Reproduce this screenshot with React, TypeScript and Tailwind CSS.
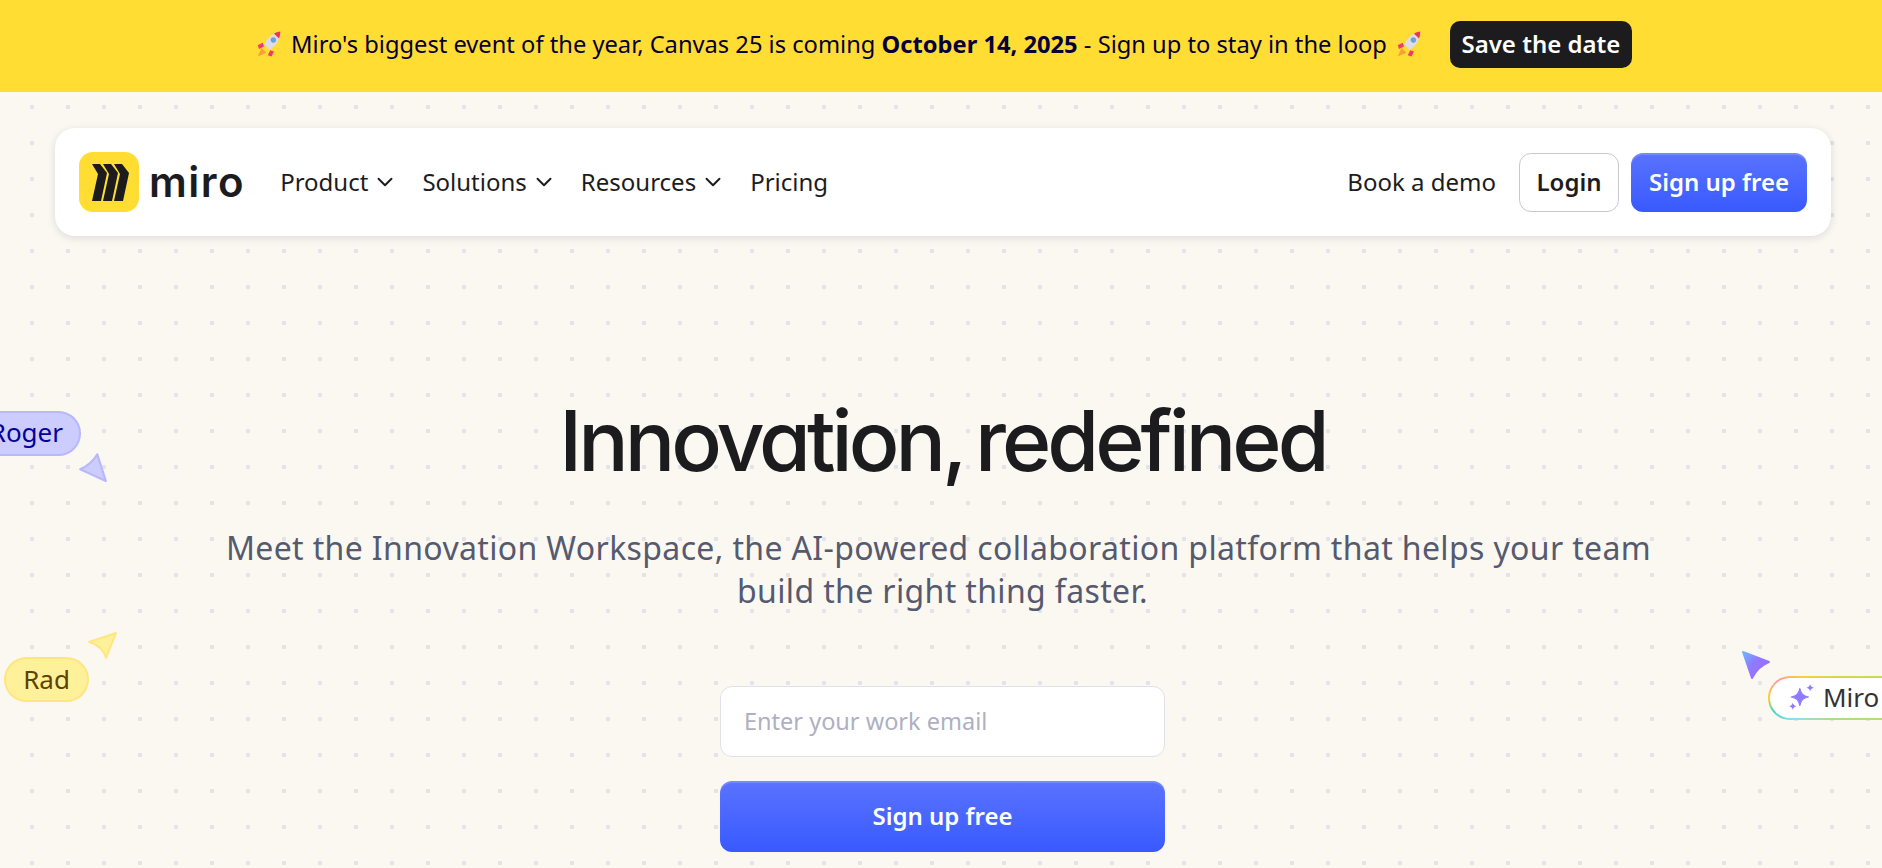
import { ChevronDown } from "lucide-react";

function Rocket() {
  return (
    <svg viewBox="0 0 24 24" className="h-[30px] w-[30px] shrink-0">
      <path d="M6 15l-3 7 7-3z" fill="#f9a03c" />
      <path d="M7 11l-4 2 1 3 4-2z" fill="#f2386f" />
      <path d="M13 17l-2 4 3 1 2-4z" fill="#f2386f" />
      <path d="M21 2c-5 .8-9 3.6-13 10l4.500 4.500c6-3.600 8.500-8.500 8.500-14.500z" fill="#dcdde8" />
      <path d="M21 2c-1.800.3-3.500.8-5 1.700L20 7.500c.7-1.600 1-3.500 1-5.500z" fill="#f0364f" />
      <circle cx="15.500" cy="8.800" r="1.900" fill="#5ba8e8" stroke="#8b8fa8" strokeWidth=".6" />
    </svg>
  );
}

function NavItem({ label }: { label: string }) {
  return (
    <button className="flex items-center gap-[4px] text-[24px] text-[#1c1c1e]">
      {label}
      <ChevronDown className="h-[26px] w-[26px]" strokeWidth={1.8} />
    </button>
  );
}

export default function App() {
  return (
    <div className="relative flex h-[868px] w-full flex-col overflow-hidden bg-[#fbf8f2] bg-[radial-gradient(circle,#e1e2ec_2px,transparent_2.500px)] bg-[size:36px_36px] bg-[position:14px_89px] font-['Noto_Sans',sans-serif] text-[#1c1c1e]">
      <div className="flex h-[92px] items-center justify-center gap-[24px] bg-[#ffdd33] pb-[3px] pl-[4px]">
        <div className="flex items-center gap-[7px] text-[23.700px] text-[#050038]">
          <Rocket />
          <span>
            Miro's biggest event of the year, Canvas 25 is coming <b>October 14, 2025</b> - Sign up to stay in the loop
          </span>
          <Rocket />
        </div>
        <button className="ml-[2px] h-[47px] w-[182px] rounded-[10px] bg-[#1c1c1e] pb-[1px] text-[24px] font-semibold text-white">
          Save the date
        </button>
      </div>

      <nav className="mt-[36px] ml-[55px] flex h-[108px] w-[1776px] items-center justify-between rounded-[20px] bg-white px-[24px] shadow-[0_2px_8px_rgba(5,0,56,0.12)]">
        <div className="flex items-center">
          <div className="flex items-center gap-[10px]">
            <svg viewBox="0 0 60 60" className="h-[60px] w-[60px]">
              <rect width="60" height="60" rx="14" fill="#ffdd33" />
              <polygon points="13,12 21,12 28,21 22,49 13,49 19,22" fill="#1c1c1e" />
              <polygon points="24,12 32,12 39,21 33,49 24,49 30,22" fill="#1c1c1e" />
              <polygon points="35,12 43,12 50,21 44,49 35,49 41,22" fill="#1c1c1e" />
            </svg>
            <span className="font-['Inter',sans-serif] text-[42px] leading-none font-semibold tracking-[1.500px]">miro</span>
          </div>
          <div className="ml-[35px] flex items-center gap-[24px]">
            <NavItem label="Product" />
            <NavItem label="Solutions" />
            <NavItem label="Resources" />
            <button className="text-[24px]">Pricing</button>
          </div>
        </div>
        <div className="flex items-center">
          <button className="mr-[23px] text-[24px]">Book a demo</button>
          <button className="mr-[12px] h-[59px] w-[100px] rounded-[12px] border border-[#c7c7d6] bg-white text-[24px] font-semibold">
            Login
          </button>
          <button className="h-[59px] w-[176px] rounded-[12px] bg-gradient-to-b from-[#5a72ff] to-[#3859ff] text-[24px] font-semibold text-white shadow-[inset_0_2px_1px_rgba(255,255,255,0.18)]">
            Sign up free
          </button>
        </div>
      </nav>

      <main className="flex flex-col items-center pl-[3px]">
        <h1 className="mt-[155px] font-['Inter',sans-serif] text-[84px] leading-[100px] font-medium tracking-[-4px] [word-spacing:-6px] [font-feature-settings:'cv11']">
          Innovation, redefined
        </h1>
        <p className="mt-[35px] w-[1500px] text-center text-[32px] leading-[43px] tracking-[0.36px] text-[#555a6f]">
          <span className="block pr-[8px]">Meet the Innovation Workspace, the AI-powered collaboration platform that helps your team</span>
          <span className="block">build the right thing faster.</span>
        </p>
        <input
          placeholder="Enter your work email"
          className="mt-[74px] h-[71px] w-[445px] rounded-[12px] border border-[#e0e0ea] bg-white px-[23px] pb-[2px] text-[23.500px] outline-none placeholder:text-[#aeb0c2]"
        />
        <button className="mt-[24px] h-[71px] w-[445px] rounded-[12px] bg-gradient-to-b from-[#5a72ff] to-[#3859ff] pb-[2px] text-[24px] font-semibold text-white shadow-[inset_0_2px_1px_rgba(255,255,255,0.18)]">
          Sign up free
        </button>
      </main>

      {/* collaborator cursors */}
      <div className="absolute top-[411px] left-[-40px] flex h-[45px] w-[121px] items-center justify-end rounded-full border-2 border-[#b8b8ff] bg-[#ccccff] pr-[16px] pb-[2px] text-[26px] text-[#050099]">
        Roger
      </div>
      <svg viewBox="0 0 30 30" className="absolute top-[450px] left-[77px] h-[32px] w-[32px]">
        <path d="M3 18C10 15 15 11 19 4l8 25z" fill="#ccccff" stroke="#b8b8ff" strokeWidth="2" strokeLinejoin="round" />
      </svg>

      <div className="absolute top-[657px] left-[4px] flex h-[45px] w-[85px] items-center justify-center rounded-full border-2 border-[#ffe680] bg-[#fff09a] text-[26px] text-[#5c4400]">
        Rad
      </div>
      <svg viewBox="0 0 32 30" className="absolute top-[630px] left-[86px] h-[30px] w-[32px]">
        <path d="M3 12l27-9-10 25C18 20 11 14 3 12z" fill="#fff09a" stroke="#ffe680" strokeWidth="2" strokeLinejoin="round" />
      </svg>

      <svg viewBox="0 0 30 30" className="absolute top-[650px] left-[1741px] h-[30px] w-[30px]">
        <defs>
          <linearGradient id="miroCursor" x1="0" y1="0" x2="1" y2="1">
            <stop offset="0" stopColor="#6fb8ff" />
            <stop offset=".4" stopColor="#8f7bff" />
            <stop offset="1" stopColor="#a066ff" />
          </linearGradient>
        </defs>
        <path d="M2 2l26 10C20 15 15 20 11 28z" fill="url(#miroCursor)" stroke="url(#miroCursor)" strokeWidth="2" strokeLinejoin="round" />
      </svg>
      <div className="absolute top-[676px] left-[1768px] h-[44px] w-[160px] rounded-full bg-[conic-gradient(from_270deg_at_12%_50%,#ffd02f,#ff9aa8_18%,#ffd02f_35%,#b6e05a_50%,#8fdcff_70%,#3dd6c0_88%,#ffd02f)] p-[2px]">
        <div className="flex h-full w-full items-center gap-[8px] rounded-full bg-white pb-[2px] pl-[19px] text-[26px] text-[#333338]">
          <svg viewBox="0 0 24 24" className="h-[26px] w-[26px] shrink-0" fill="#8f7bff">
            <path d="M10 4c.7 5 3 7.300 8 8-5 .7-7.300 3-8 8-.7-5-3-7.300-8-8 5-.7 7.300-3 8-8z" stroke="#8f7bff" strokeWidth="1" strokeLinejoin="round" />
            <path d="M19.500 0c.4 2.100 1.400 3.100 3.500 3.500-2.100.4-3.100 1.400-3.500 3.500-.4-2.100-1.400-3.100-3.500-3.500 2.100-.4 3.100-1.400 3.500-3.500z" />
            <path d="M3.500 17c.4 2.100 1.400 3.100 3.500 3.500-2.100.4-3.100 1.400-3.500 3.500-.4-2.100-1.400-3.100-3.500-3.500 2.100-.4 3.100-1.400 3.500-3.500z" />
          </svg>
          Miro
        </div>
      </div>
    </div>
  );
}
